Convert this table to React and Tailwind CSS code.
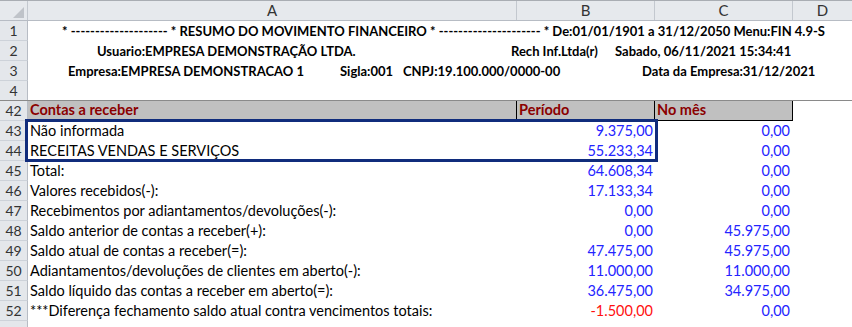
import React from "react";

const rows = [
  { n: 43, label: "Não informada", b: "9.375,00", c: "0,00" },
  { n: 44, label: "RECEITAS VENDAS E SERVIÇOS", b: "55.233,34", c: "0,00" },
  { n: 45, label: "Total:", b: "64.608,34", c: "0,00" },
  { n: 46, label: "Valores recebidos(-):", b: "17.133,34", c: "0,00" },
  { n: 47, label: "Recebimentos por adiantamentos/devoluções(-):", b: "0,00", c: "0,00" },
  { n: 48, label: "Saldo anterior de contas a receber(+):", b: "0,00", c: "45.975,00" },
  { n: 49, label: "Saldo atual de contas a receber(=):", b: "47.475,00", c: "45.975,00" },
  { n: 50, label: "Adiantamentos/devoluções de clientes em aberto(-):", b: "11.000,00", c: "11.000,00" },
  { n: 51, label: "Saldo líquido das contas a receber em aberto(=):", b: "36.475,00", c: "34.975,00" },
  { n: 52, label: "***Diferença fechamento saldo atual contra vencimentos totais:", b: "-1.500,00", c: "0,00", neg: true },
];

function RowNum({ n, last }) {
  return (
    <div
      className={
        "w-[28px] shrink-0 flex items-center justify-center bg-[#e4e7eb] border-r border-[#b7bcc4] text-[14px] text-[#333] " +
        (last ? "" : "border-b border-b-[#cdd2d9]")
      }
    >
      {n}
    </div>
  );
}

function ColHead({ label, className }) {
  return (
    <div
      className={
        "flex items-center justify-center border-r border-[#c3c8cf] text-[15px] text-[#333] " +
        className
      }
    >
      {label}
    </div>
  );
}

export default function App() {
  return (
    <div className="relative w-[852px] h-[327px] overflow-hidden bg-white font-['Lato',sans-serif] text-[14.5px] leading-none text-black">
      {/* column headers */}
      <div className="flex h-[21px] bg-[#e6e9ed] border-t border-[#a9adb3] border-b border-b-[#b7bcc4]">
        <div className="w-[28px] shrink-0 border-r border-[#c3c8cf] relative">
          <svg className="absolute right-[3px] bottom-[2px]" width="11" height="11" viewBox="0 0 11 11">
            <polygon points="11,0 11,11 0,11" fill="#bfc3c9" />
          </svg>
        </div>
        <ColHead label="A" className="w-[489px] shrink-0" />
        <ColHead label="B" className="w-[138px] shrink-0" />
        <ColHead label="C" className="w-[138px] shrink-0" />
        <ColHead label="D" className="flex-1 border-r-0" />
      </div>

      {/* title rows */}
      <div className="flex h-[20px]">
        <RowNum n={1} />
        <div className="flex-1 flex items-center justify-center pl-[7px] font-bold text-[13px] whitespace-nowrap">
          * -------------------- * RESUMO DO MOVIMENTO FINANCEIRO * --------------------- * De:01/01/1901 a 31/12/2050 Menu:FIN 4.9-S
        </div>
      </div>
      <div className="flex h-[20px]">
        <RowNum n={2} />
        <div className="flex-1 flex items-center pl-[69px] font-bold text-[13px] whitespace-nowrap">
          <span className="w-[414px] shrink-0">Usuario:EMPRESA DEMONSTRAÇÃO LTDA.</span>
          <span className="w-[104px] shrink-0">Rech Inf.Ltda(r)</span>
          <span>Sabado, 06/11/2021 15:34:41</span>
        </div>
      </div>
      <div className="flex h-[20px]">
        <RowNum n={3} />
        <div className="flex-1 flex items-center pl-[40px] font-bold text-[13px] whitespace-nowrap">
          <span className="w-[272px] shrink-0">Empresa:EMPRESA DEMONSTRACAO 1</span>
          <span className="w-[63px] shrink-0">Sigla:001</span>
          <span className="w-[239px] shrink-0">CNPJ:19.100.000/0000-00</span>
          <span>Data da Empresa:31/12/2021</span>
        </div>
      </div>
      <div className="flex h-[20px] border-b border-[#8a8a8a]">
        <RowNum n={4} last />
        <div className="flex-1" />
      </div>

      {/* section header */}
      <div className="flex h-[20px]">
        <RowNum n={42} />
        <div className="flex font-bold text-[#8b0000] border-b border-black">
          <div className="w-[489px] bg-[#c0c0c0] border-r border-black flex items-center pl-[2px]">Contas a receber</div>
          <div className="w-[138px] bg-[#c0c0c0] border-r border-black flex items-center pl-[2px]">Período</div>
          <div className="w-[138px] bg-[#c0c0c0] border-r border-black flex items-center pl-[2px]">No mês</div>
        </div>
      </div>

      {rows.map((r) => (
        <div key={r.n} className="flex h-[20px]">
          <RowNum n={r.n} />
          <div className="w-[489px] shrink-0 flex items-center pl-[2px] whitespace-nowrap">{r.label}</div>
          <div
            className={
              "w-[138px] shrink-0 flex items-center justify-end pr-[2px] " +
              (r.neg ? "text-[#ff1010]" : "text-[#2424ff]")
            }
          >
            {r.b}
          </div>
          <div className="w-[138px] shrink-0 flex items-center justify-end pr-[3px] text-[#2424ff]">{r.c}</div>
        </div>
      ))}
      <div className="flex h-[20px]">
        <RowNum n="" last />
      </div>

      {/* thick border around A43:B44 */}
      <div className="absolute left-[25px] top-[119px] w-[633px] h-[43px] border-[3px] border-[#102c7c] pointer-events-none" />
    </div>
  );
}
